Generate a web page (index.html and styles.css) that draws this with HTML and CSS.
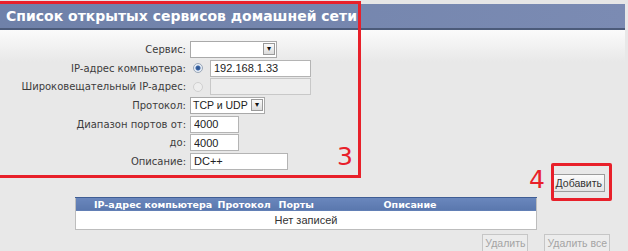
FILE: index.html
```html
<!DOCTYPE html>
<html lang="ru">
<head>
  <meta charset="UTF-8" />
  <title>Список открытых сервисов домашней сети</title>
  <link rel="stylesheet" href="styles.css">
</head>
<body>
  <div class="page">
    <div class="topline"></div>
    <h1 class="title">Список открытых сервисов домашней сети</h1>

    <div class="panel">
      <div class="form">
        <label>Сервис:</label>
        <div class="ctrl"><span class="select wide"><span class="val"></span><span class="arrow">&#9662;</span></span></div>

        <label>IP-адрес компьютера:</label>
        <div class="ctrl"><span class="radio on"></span><input type="text" class="ip" value="192.168.1.33"></div>

        <label>Широковещательный IP-адрес:</label>
        <div class="ctrl"><span class="radio"></span><input type="text" class="ip off" value="" disabled></div>

        <label>Протокол:</label>
        <div class="ctrl"><span class="select"><span class="val">TCP и UDP</span><span class="arrow">&#9662;</span></span></div>

        <label>Диапазон портов от:</label>
        <div class="ctrl"><input type="text" class="port" value="4000"></div>

        <label>до:</label>
        <div class="ctrl"><input type="text" class="port" value="4000"></div>

        <label>Описание:</label>
        <div class="ctrl"><input type="text" class="desc" value="DC++"></div>
      </div>

      <div class="add-row">
        <button class="btn">Добавить</button>
      </div>

      <table class="list">
        <thead>
          <tr>
            <th class="c-ip">IP-адрес компьютера</th>
            <th class="c-proto">Протокол</th>
            <th class="c-ports">Порты</th>
            <th class="c-desc">Описание</th>
          </tr>
        </thead>
        <tbody>
          <tr><td colspan="4">Нет записей</td></tr>
        </tbody>
      </table>

      <div class="del-row">
        <button class="btn" disabled>Удалить</button>
        <button class="btn" disabled>Удалить все</button>
      </div>
    </div>

    <!-- annotations drawn over the screenshot -->
    <div class="mark mark-3"><span>3</span></div>
    <div class="mark mark-4"></div>
    <span class="num num-4">4</span>
  </div>
</body>
</html>
```

FILE: styles.css
```css
* {
  box-sizing: border-box;
}

body {
  margin: 0;
  background: #e8e8e8;
  font-family: 'DejaVu Sans', Verdana, sans-serif;
  font-size: 10px;
  color: #3c3c3c;
}

.page {
  position: relative;
  width: 628px;
  height: 251px;
  overflow: hidden;
}

.topline {
  height: 4px;
  background: #e6e6e6;
}

.title {
  margin: 0;
  width: 625px;
  height: 26px;
  padding: 4px 0 0 6px;
  font-size: 14px;
  font-weight: bold;
  color: #fff;
  background: linear-gradient(to right, #6f81a9, #7b8bb3);
  border-bottom: 2px solid #4c5b7a;
  white-space: nowrap;
}

.panel {
  width: 625px;
  background: linear-gradient(to bottom, #fbfbfb 0, #e8e8e8 32px, #e8e8e8 100%);
  padding-top: 10px;
}

.form {
  display: grid;
  grid-template-columns: 186px auto;
  column-gap: 4px;
  grid-auto-rows: 18.7px;
  align-items: center;
}

.form label {
  text-align: right;
  white-space: nowrap;
}

.ctrl {
  display: flex;
  align-items: center;
}

input[type=text] {
  height: 17px;
  margin: 0;
  padding: 0 3px;
  border: 1px solid #b4b4b4;
  background: #fff;
  font-family: 'Liberation Sans', Arial, sans-serif;
  font-size: 11px;
  color: #222;
}

input.ip {
  width: 101px;
}

input.off {
  background: #ededed;
  border-color: #c8c8c8;
}

input.port {
  width: 49px;
}

input.desc {
  width: 98px;
}

.select {
  display: flex;
  align-items: center;
  height: 17px;
  border: 1px solid #a9a9a9;
  background: #fff;
  font-family: 'Liberation Sans', Arial, sans-serif;
  font-size: 10.5px;
  color: #222;
  white-space: nowrap;
}

.select .val {
  padding: 0 2px;
}

.select.wide .val {
  width: 71px;
}

.select .arrow {
  width: 12px;
  height: 12px;
  margin: 0 1px;
  border: 1px solid #9a9a9a;
  background: linear-gradient(#fafafa, #dcdcdc);
  font-size: 8px;
  line-height: 10px;
  text-align: center;
  color: #111;
}

.radio {
  width: 10px;
  height: 10px;
  margin: 0 7px 0 3px;
  border: 1px solid #9aa7b8;
  border-radius: 50%;
  background: #f4f4f4;
}

.radio.on {
  background: radial-gradient(circle, #2c4f86 0, #3a66a8 2px, #e8eef6 3px);
}

.radio:not(.on) {
  border-color: #d0d0d0;
  background: #eee;
}

.add-row {
  display: flex;
  justify-content: flex-end;
  padding: 3px 20px 0 0;
  height: 26px;
}

.btn {
  height: 18px;
  padding: 0 2px;
  border: 1px solid #9c9c9c;
  background: linear-gradient(#fbfbfb, #e4e4e4);
  font-family: 'Liberation Sans', Arial, sans-serif;
  font-size: 10.5px;
  color: #333;
}

.btn:disabled {
  color: #a4a4a4;
  border-color: #c6c6c6;
  background: #ececec;
}

.list {
  margin-left: 75px;
  width: 462px;
  border-collapse: collapse;
  border: 1px solid #bdbdbd;
  table-layout: fixed;
}

.list th {
  height: 14px;
  padding: 0;
  background: linear-gradient(#6a87bd, #5a77ad);
  border-top: 1px solid #3f5d94;
  color: #fff;
  font-size: 9.5px;
  font-weight: bold;
  text-align: left;
  white-space: nowrap;
}

.list th.c-ip {
  padding-left: 18px;
  width: 142px;
}

.list th.c-proto {
  width: 61px;
}

.list th.c-ports {
  width: 105px;
}

.list td {
  height: 18px;
  background: #fff;
  text-align: center;
  color: #333;
  font-family: 'Liberation Sans', Arial, sans-serif;
  font-size: 11px;
  padding: 0;
}

.del-row {
  display: flex;
  justify-content: flex-end;
  gap: 16px;
  padding: 4px 15px 0 0;
}

.mark {
  position: absolute;
  border: 3px solid #e8202a;
  pointer-events: none;
}

.mark-3 {
  left: -4px;
  top: 1px;
  width: 365px;
  height: 177px;
}

.mark-3 span {
  position: absolute;
  right: 5px;
  bottom: 6px;
  font-family: 'DejaVu Sans', sans-serif;
  font-size: 25px;
  line-height: 1;
  color: #e8202a;
}

.mark-4 {
  left: 551px;
  top: 163px;
  width: 61px;
  height: 38px;
  border-radius: 2px;
}

.num {
  position: absolute;
  font-family: 'DejaVu Sans', sans-serif;
  font-size: 25px;
  line-height: 1;
  color: #e8202a;
}

.num-4 {
  left: 529px;
  top: 167px;
}
```
